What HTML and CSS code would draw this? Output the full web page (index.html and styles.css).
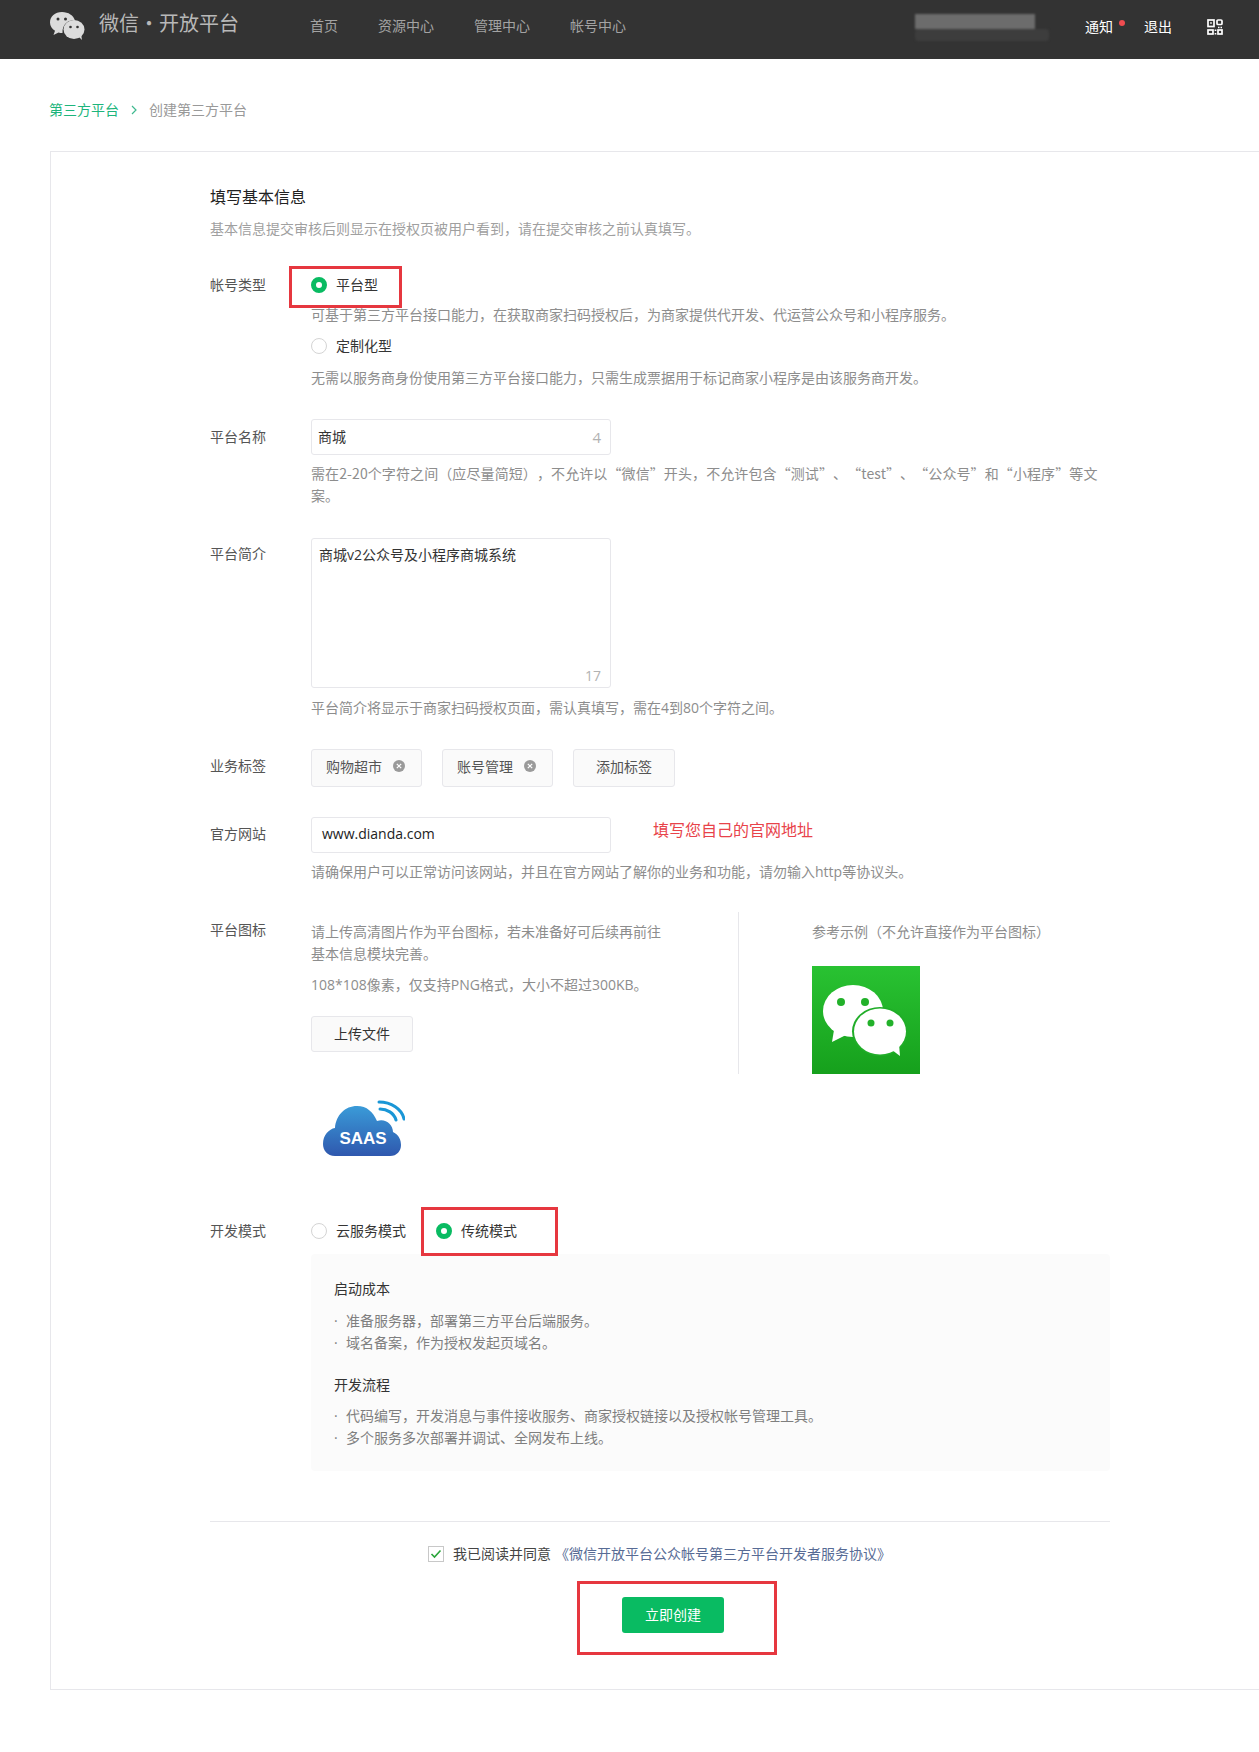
FILE: index.html
```html
<!DOCTYPE html>
<html lang="zh-CN">
<head>
<meta charset="utf-8">
<title>创建第三方平台</title>
<link rel="stylesheet" href="styles.css">
</head>
<body>
<div class="page">
  <header class="topbar">
    <svg class="brand-icon" viewBox="0 0 36 28" width="36" height="28">
      <path d="M13 0C6 0 1 4.600 1 10.500C1 14 3 16.800 6 18.800L4.500 23L9.500 20.500C10.800 20.900 12 21 13.500 21C13 12 20 7.500 26 8.500C24.500 3.500 19.500 0 13 0Z" fill="#dcdcdc"/>
      <ellipse cx="25" cy="17.500" rx="10.500" ry="9.500" fill="#dcdcdc"/>
      <path d="M30 25L33 28L32 22Z" fill="#dcdcdc"/>
      <circle cx="9" cy="7" r="1.500" fill="#333"/><circle cx="16.500" cy="7" r="1.500" fill="#333"/>
      <circle cx="21.500" cy="15" r="1.300" fill="#333"/><circle cx="28.500" cy="15" r="1.300" fill="#333"/>
    </svg>
    <div class="brand-name">微信・开放平台</div>
    <nav class="nav">
      <a>首页</a><a>资源中心</a><a>管理中心</a><a>帐号中心</a>
    </nav>
    <div class="user">
      <div class="blur-name"><span class="blur-top"></span><span class="blur-bottom"></span></div>
      <a class="notice">通知<i class="dot"></i></a>
      <a class="logout">退出</a>
      <svg class="qr" viewBox="0 0 16 16" width="16" height="16" fill="none" stroke="#fff" stroke-width="1.700">
        <rect x="1" y="1" width="6" height="6.500"/><rect x="10" y="1" width="5" height="4.500" rx="1"/>
        <rect x="1" y="11" width="5" height="4"/><rect x="11" y="11" width="4" height="4"/>
        <path d="M3.200 4H4.800M8.500 10.500V12M8.500 14V15.500M11 8.500H12.500M13.500 8.500H15"/>
      </svg>
    </div>
  </header>

  <div class="crumbs">
    <a class="crumb-link">第三方平台</a>
    <svg class="crumb-sep" viewBox="0 0 6 10" width="6" height="10" fill="none" stroke="#3fb98f" stroke-width="1.200"><path d="M1 1L5 5L1 9"/></svg>
    <span class="crumb-now">创建第三方平台</span>
  </div>

  <main class="card">
    <h1 class="title">填写基本信息</h1>
    <p class="lead">基本信息提交审核后则显示在授权页被用户看到，请在提交审核之前认真填写。</p>

    <section class="row row-type">
      <div class="label">帐号类型</div>
      <div class="field">
        <div class="choice"><span class="radio on"></span><span>平台型</span><span class="mark mark-platform"></span></div>
        <p class="hint hint-tight">可基于第三方平台接口能力，在获取商家扫码授权后，为商家提供代开发、代运营公众号和小程序服务。</p>
        <div class="choice choice-second"><span class="radio"></span><span>定制化型</span></div>
        <p class="hint hint-second">无需以服务商身份使用第三方平台接口能力，只需生成票据用于标记商家小程序是由该服务商开发。</p>
      </div>
    </section>

    <section class="row row-name">
      <div class="label label-input">平台名称</div>
      <div class="field">
        <div class="input input-name"><span>商城</span><span class="count">4</span></div>
        <p class="hint hint-input">需在2-20个字符之间（应尽量简短），不允许以“微信”开头，不允许包含“测试”、“test”、“公众号”和“小程序”等文案。</p>
      </div>
    </section>

    <section class="row row-intro">
      <div class="label label-area">平台简介</div>
      <div class="field">
        <div class="textarea"><span>商城v2公众号及小程序商城系统</span><span class="count count-area">17</span></div>
        <p class="hint hint-area">平台简介将显示于商家扫码授权页面，需认真填写，需在4到80个字符之间。</p>
      </div>
    </section>

    <section class="row row-tags">
      <div class="label label-tags">业务标签</div>
      <div class="field tags">
        <div class="tag tag-item">购物超市<svg class="tag-x" viewBox="0 0 12 12" width="12" height="12"><circle cx="6" cy="6" r="6" fill="#9a9a9a"/><path d="M3.800 3.800L8.200 8.200M8.200 3.800L3.800 8.200" stroke="#fff" stroke-width="1.200"/></svg></div>
        <div class="tag tag-item">账号管理<svg class="tag-x" viewBox="0 0 12 12" width="12" height="12"><circle cx="6" cy="6" r="6" fill="#9a9a9a"/><path d="M3.800 3.800L8.200 8.200M8.200 3.800L3.800 8.200" stroke="#fff" stroke-width="1.200"/></svg></div>
        <div class="tag tag-add">添加标签</div>
      </div>
    </section>

    <section class="row row-site">
      <div class="label label-site">官方网站</div>
      <div class="field">
        <div class="site-line">
          <div class="input input-site">www.dianda.com</div>
          <span class="note">填写您自己的官网地址</span>
        </div>
        <p class="hint hint-site">请确保用户可以正常访问该网站，并且在官方网站了解你的业务和功能，请勿输入http等协议头。</p>
      </div>
    </section>

    <section class="row row-icon">
      <div class="label label-icon">平台图标</div>
      <div class="field">
        <div class="icon-split">
          <div class="icon-left">
            <p class="icon-text">请上传高清图片作为平台图标，若未准备好可后续再前往<br>基本信息模块完善。</p>
            <p class="icon-spec">108*108像素，仅支持PNG格式，大小不超过300KB。</p>
            <div class="btn-upload">上传文件</div>
          </div>
          <div class="icon-right">
            <p class="ref-title">参考示例（不允许直接作为平台图标）</p>
            <svg class="sample" viewBox="0 0 108 108" width="108" height="108">
              <defs><linearGradient id="wxg" x1="0" y1="0" x2="0" y2="1"><stop offset="0" stop-color="#29c232"/><stop offset="1" stop-color="#16a01c"/></linearGradient></defs>
              <rect width="108" height="108" fill="url(#wxg)"/>
              <ellipse cx="41" cy="45" rx="30" ry="26" fill="#fff"/>
              <path d="M22 64L20 76L34 69Z" fill="#fff"/>
              <ellipse cx="68" cy="65.500" rx="28" ry="24.500" fill="#20ad28"/>
              <ellipse cx="68" cy="65.500" rx="26" ry="23" fill="#fff"/>
              <path d="M80 84L88 90L87 78Z" fill="#fff"/>
              <circle cx="29" cy="36" r="4" fill="#22b12a"/><circle cx="53" cy="36" r="4" fill="#22b12a"/>
              <circle cx="59" cy="57" r="3.500" fill="#22b12a"/><circle cx="78" cy="57" r="3.500" fill="#22b12a"/>
            </svg>
          </div>
        </div>
        <svg class="saas" viewBox="0 0 82 56" width="82" height="56">
          <defs><linearGradient id="sg" x1="0" y1="0" x2="0" y2="1"><stop offset="0" stop-color="#3a9bd8"/><stop offset="1" stop-color="#2f58ae"/></linearGradient></defs>
          <path d="M12 56C4 56 0 50 0 44C0 35 6 29 12 28C13 15 22 6 34 6C44 6 50 12 54 21C62 18 70 24 70 32C76 35 78 40 78 45C78 51 74 56 67 56Z" fill="url(#sg)"/>
          <path d="M56 2C68 2 79 9 81 19M57 9C64 9 71 13 73 20" fill="none" stroke="#1a96d6" stroke-width="3" stroke-linecap="round"/>
          <text class="saas-text" x="40" y="44" text-anchor="middle">SAAS</text>
        </svg>
      </div>
    </section>

    <section class="row row-mode">
      <div class="label">开发模式</div>
      <div class="field">
        <div class="modes">
          <div class="choice mode-one"><span class="radio"></span><span>云服务模式</span></div>
          <div class="choice"><span class="radio on"></span><span>传统模式</span><span class="mark mark-mode"></span></div>
        </div>
        <div class="panel">
          <h2 class="panel-title">启动成本</h2>
          <ul class="panel-list">
            <li>准备服务器，部署第三方平台后端服务。</li>
            <li>域名备案，作为授权发起页域名。</li>
          </ul>
          <h2 class="panel-title panel-title-next">开发流程</h2>
          <ul class="panel-list panel-list-next">
            <li>代码编写，开发消息与事件接收服务、商家授权链接以及授权帐号管理工具。</li>
            <li>多个服务多次部署并调试、全网发布上线。</li>
          </ul>
        </div>
      </div>
    </section>

    <div class="footer-line"></div>
    <div class="agree">
      <span class="check"><svg viewBox="0 0 12 10" width="12" height="10" fill="none" stroke="#2aa53a" stroke-width="1.600"><path d="M1.500 5L4.500 8L10.500 1.500"/></svg></span>
      <span class="agree-text">我已阅读并同意</span>
      <a class="agree-link">《微信开放平台公众帐号第三方平台开发者服务协议》</a>
    </div>
    <div class="submit-wrap">
      <div class="submit">立即创建</div>
      <span class="mark mark-submit"></span>
    </div>
  </main>
</div>
</body>
</html>
```

FILE: styles.css
```css
* { box-sizing: border-box; }
html, body { margin: 0; padding: 0; background: #fff; }
body {
  font-family: "Open Sans", "Noto Sans CJK SC", "Liberation Sans", sans-serif;
  font-size: 14px;
  line-height: 20px;
  color: #353535;
  overflow-x: hidden;
  text-spacing-trim: space-all;
}
p, h1, h2, ul { margin: 0; padding: 0; font-weight: 400; }

.topbar {
  height: 59px;
  background: #333;
  display: flex;
  align-items: center;
  padding: 0 36px 6px 49px;
}
.brand-icon { margin-top: -1px; }
.brand-name { margin-left: 14px; width: 211px; font-size: 20px; line-height: 28px; color: #b8b8b8; white-space: nowrap; margin-top: -5px; }
.nav { display: flex; gap: 40px; color: #a3a3a3; margin-top: -2px; }
.user { margin-left: auto; display: flex; align-items: center; color: #fff; }
.blur-name { width: 136px; height: 27px; margin-right: 40px; margin-top: 2px; display: flex; flex-direction: column; padding-left: 6px; filter: blur(1px); }
.blur-top { width: 120px; height: 15px; background: #6c6c6c; }
.blur-bottom { width: 134px; height: 12px; background: #3d3d3d; border-radius: 3px; }
.notice { position: relative; }
.dot { position: absolute; left: 34px; top: 3px; width: 6px; height: 6px; border-radius: 50%; background: #f04c50; }
.logout { margin-left: 31px; }
.qr { margin-left: 35px; margin-top: 1px; }

.crumbs { margin: 41px 0 31px 49px; display: flex; align-items: center; height: 20px; }
.crumb-link { color: #1db57c; }
.crumb-sep { margin: 0 12px 0 12px; }
.crumb-now { color: #999; }

.card {
  margin-left: 50px;
  border: 1px solid #e7e7eb;
  border-right: 0;
  height: 1539px;
  padding: 33px 0 0 159px;
  position: relative;
}
.title { font-size: 16px; line-height: 24px; color: #222; }
.lead { margin-top: 10px; color: #a0a0a0; }

.row { display: grid; grid-template-columns: 101px 799px; width: 900px; }
.label { color: #555; }
.hint { color: #8d8d8d; }
.row-type { margin-top: 36px; }
.row-name { margin-top: 31px; }
.row-intro { margin-top: 32px; }
.row-tags { margin-top: 31px; }
.row-site { margin-top: 30px; }
.row-icon { margin-top: 30px; }

.choice { display: flex; align-items: center; position: relative; }
.choice-second { margin-top: 11px; }
.radio { width: 16px; height: 16px; border-radius: 50%; border: 1px solid #d4d4d4; margin-right: 9px; background: #fff; flex: none; }
.radio.on { border: 5px solid #09bb62; }
.hint-tight { margin-top: 10px; }
.hint-second { margin-top: 12px; }

.input, .textarea { border: 1px solid #e7e7eb; border-radius: 3px; width: 300px; background: #fff; color: #333; }
.input { height: 36px; display: flex; align-items: center; justify-content: space-between; }
.input-name { padding: 0 9px 0 6px; }
.input-site { padding: 0 10px 2px; color: #222; }
.label-input { padding-top: 8px; }
.label-site { padding-top: 7px; }
.count { color: #b2b2b2; }
.input-name .count { font-size: 15px; }
.hint-input { margin-top: 7px; line-height: 22px; max-width: 792px; letter-spacing: .1px; font-family: "Noto Sans CJK SC", sans-serif; }
.label-area { padding-top: 6px; }
.textarea { height: 150px; padding: 6px 7px; position: relative; }
.count-area { position: absolute; right: 9px; bottom: 1px; }
.hint-area { margin-top: 10px; }

.tags { display: flex; gap: 20px; }
.label-tags { padding-top: 7px; }
.tag { height: 38px; display: flex; align-items: center; padding-bottom: 2px; background: #fafafa; border: 1px solid #e7e7eb; border-radius: 3px; color: #555; }
.tag-item { width: 111px; padding-left: 14px; }
.tag-x { margin: -2px 0 0 11px; }
.tag-add { width: 102px; justify-content: center; }

.site-line { display: flex; align-items: center; }
.note { margin-left: 42px; margin-bottom: 10px; font-size: 16px; color: #e8434a; }
.hint-site { margin-top: 9px; }

.label-icon { padding-top: 8px; }
.icon-split { display: flex; height: 162px; }
.icon-left { width: 428px; padding-top: 9px; border-right: 1px solid #e7e7eb; color: #8d8d8d; }
.icon-text { line-height: 22px; }
.icon-spec { margin-top: 10px; }
.btn-upload { margin-top: 21px; width: 102px; height: 36px; line-height: 34px; text-align: center; background: #fafafa; border: 1px solid #e7e7eb; border-radius: 3px; color: #333; }
.icon-right { padding: 9px 0 0 73px; color: #8d8d8d; }
.ref-title { height: 45px; line-height: 22px; }
.sample { display: block; }
.saas { display: block; margin: 26px 0 0 12px; }
.saas-text { font-family: "Liberation Sans", sans-serif; font-weight: 700; font-size: 17px; fill: #fff; }

.row-mode { margin-top: 65px; }
.modes { display: flex; height: 20px; }
.mode-one { width: 125px; }
.panel { margin-top: 13px; height: 217px; background: #fbfbfb; border-radius: 4px; padding: 25px 23px; }
.panel-title { font-size: 14px; line-height: 20px; color: #333; }
.panel-title-next { margin-top: 21px; }
.panel-list { list-style: none; margin-top: 11px; color: #7f7f7f; }
.panel-list-next { margin-top: 10px; }
.panel-list li { line-height: 22px; padding-left: 12px; position: relative; }
.panel-list li::before { content: "·"; position: absolute; left: 0; top: 0; }

.footer-line { margin-top: 50px; width: 900px; height: 1px; background: #e7e7eb; }
.agree { width: 900px; margin-top: 22px; display: flex; align-items: center; padding-left: 218px; height: 20px; }
.check { width: 16px; height: 16px; border: 1px solid #c8c8c8; display: flex; align-items: center; justify-content: center; margin-right: 9px; }
.agree-text { color: #444; }
.agree-link { margin-left: 4px; color: #576b95; }
.submit-wrap { width: 900px; margin-top: 33px; padding-left: 412px; position: relative; }
.submit { width: 102px; height: 36px; line-height: 36px; text-align: center; color: #fff; background: #09bb62; border-radius: 3px; }

.mark { position: absolute; border: 3px solid #e6373f; pointer-events: none; }
.mark-platform { left: -22px; top: -9px; width: 113px; height: 42px; }
.mark-mode { left: -15px; top: -14px; width: 137px; height: 49px; }
.mark-submit { left: 367px; top: -16px; width: 200px; height: 74px; }
```
